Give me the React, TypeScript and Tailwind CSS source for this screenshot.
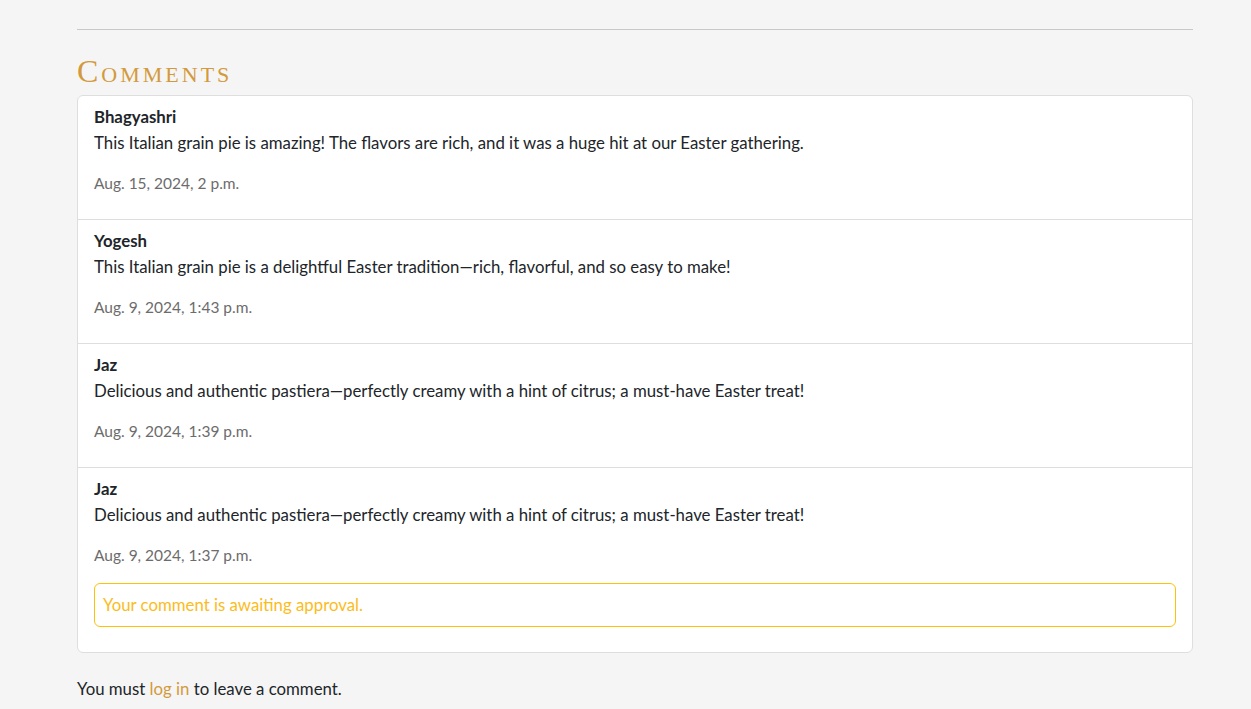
const comments = [
  {
    name: "Bhagyashri",
    body: "This Italian grain pie is amazing! The flavors are rich, and it was a huge hit at our Easter gathering.",
    date: "Aug. 15, 2024, 2 p.m.",
  },
  {
    name: "Yogesh",
    body: "This Italian grain pie is a delightful Easter tradition—rich, flavorful, and so easy to make!",
    date: "Aug. 9, 2024, 1:43 p.m.",
  },
  {
    name: "Jaz",
    body: "Delicious and authentic pastiera—perfectly creamy with a hint of citrus; a must-have Easter treat!",
    date: "Aug. 9, 2024, 1:39 p.m.",
  },
  {
    name: "Jaz",
    body: "Delicious and authentic pastiera—perfectly creamy with a hint of citrus; a must-have Easter treat!",
    date: "Aug. 9, 2024, 1:37 p.m.",
    pending: true,
  },
];

export default function App() {
  return (
    <div className="min-h-screen bg-[#f5f5f5] font-['Lato','Liberation_Sans',sans-serif] text-[16.8px] leading-6 text-[#212529]">
      <div className="mx-[77px] w-[1116px] pt-[29px]">
        <hr className="border-t border-[#c8c8c8]" />

        <h2 className="mt-[23px] mb-[6px] font-['Liberation_Serif',serif] text-[32px] leading-[36px] tracking-[3px] text-[#d39a3c] [font-variant:small-caps]">
          Comments
        </h2>

        <div className="rounded-md border border-[#dedede] bg-white">
          {comments.map((c, i) => (
            <div
              key={i}
              className={`px-4 pt-[9px] ${i > 0 ? "border-t border-[#dedede]" : ""} ${c.pending ? "pb-[25px]" : "pb-6"}`}
            >
              <p className="font-bold">{c.name}</p>
              <p className="mt-[2px]">{c.body}</p>
              <p className="mt-4 text-[15.5px] text-[#6c6c6c]">{c.date}</p>
              {c.pending && (
                <div className="mt-4 rounded-md border border-[#ffc107] px-2 py-[9px] text-[#fbbc1c]">
                  Your comment is awaiting approval.
                </div>
              )}
            </div>
          ))}
        </div>

        <p className="mt-6">
          You must{" "}
          <a href="#" className="text-[#d39a3c]">
            log in
          </a>{" "}
          to leave a comment.
        </p>
      </div>
    </div>
  );
}
